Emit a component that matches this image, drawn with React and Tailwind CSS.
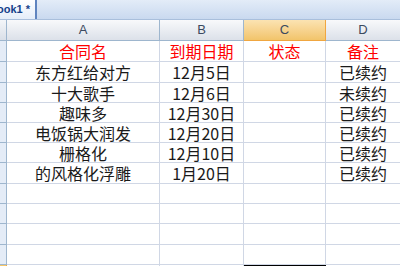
import React from 'react';

const rows = [
    { h: 'h-[21px]', cells: ['合同名', '到期日期', '状态', '备注'], head: true },
    { h: 'h-[21px]', cells: ['东方红给对方', '12月5日', '', '已续约'] },
    { h: 'h-[20px]', cells: ['十大歌手', '12月6日', '', '未续约'] },
    { h: 'h-[20px]', cells: ['趣味多', '12月30日', '', '已续约'] },
    { h: 'h-[20px]', cells: ['电饭锅大润发', '12月20日', '', '已续约'] },
    { h: 'h-[20px]', cells: ['栅格化', '12月10日', '', '已续约'] },
    { h: 'h-[21px]', cells: ['的风格化浮雕', '1月20日', '', '已续约'] },
    { h: 'h-[20px]', cells: ['', '', '', ''] },
    { h: 'h-[20px]', cells: ['', '', '', ''] },
    { h: 'h-[21px]', cells: ['', '', '', ''] },
    { h: 'h-[20px]', cells: ['', '', '', ''] },
];

const App = () => {
    return (
        <div className="w-[400px] h-[266px] overflow-hidden bg-white flex flex-col font-['Noto_Sans_CJK_SC',sans-serif]">
            {/* Workbook tab strip */}
            <div className="h-[20px] shrink-0 flex bg-gradient-to-b from-[#e3ecf8] to-[#c9d9ef] border-b border-[#a9bfdc]">
                <div className="w-[37px] flex items-center justify-end pr-[5px] bg-gradient-to-b from-white to-[#e4edf9] border-r-2 border-[#5f84bf] overflow-hidden">
                    <span className="whitespace-nowrap text-[11px] font-bold text-[#15428b] font-['Liberation_Sans',sans-serif]">
                        ook1 *
                    </span>
                </div>
            </div>

            {/* Column headers */}
            <div className="h-[21px] shrink-0 grid grid-cols-[7px_153px_84px_82px_1fr] font-['Liberation_Sans',sans-serif] text-[13px] text-[#3b4a60]">
                <div className="bg-gradient-to-b from-[#f4f6f9] to-[#d9dfe8] border-r border-b border-[#9eb6ce]" />
                <div className="flex items-center justify-center bg-gradient-to-b from-[#f8f9fb] to-[#dce1e9] border-r border-b border-[#9eb6ce]">A</div>
                <div className="flex items-center justify-center bg-gradient-to-b from-[#f8f9fb] to-[#dce1e9] border-r border-b border-[#9eb6ce]">B</div>
                <div className="flex items-center justify-center bg-gradient-to-b from-[#fbe3b2] to-[#f2c46a] border-r border-b border-[#f0a640]">C</div>
                <div className="flex items-center justify-center bg-gradient-to-b from-[#f8f9fb] to-[#dce1e9] border-b border-[#9eb6ce]">D</div>
            </div>

            {/* Sheet body */}
            {rows.map((row, i) => (
                <div key={i} className={`${row.h} shrink-0 grid grid-cols-[7px_153px_84px_82px_1fr] text-[16px] leading-[18px]`}>
                    <div className="bg-[#e4ecf7] border-r border-b border-[#9eb6ce]" />
                    {row.cells.map((c, j) => (
                        <div
                            key={j}
                            className={`flex items-center justify-center whitespace-nowrap border-b border-[#d0d7e5] ${j < 3 ? 'border-r' : ''} ${row.head ? 'text-[#ff0000]' : 'text-[#1a1a1a]'}`}
                        >
                            {c}
                        </div>
                    ))}
                </div>
            ))}

            {/* Active row, cut off at the bottom */}
            <div className="h-[20px] shrink-0 grid grid-cols-[7px_153px_84px_82px_1fr]">
                <div className="bg-[#f5c76a] border-r border-[#f0a640]" />
                <div className="border-r border-[#d0d7e5]" />
                <div className="border-r border-[#d0d7e5]" />
                <div className="border-2 border-black" />
                <div />
            </div>
        </div>
    );
};

export default App;
